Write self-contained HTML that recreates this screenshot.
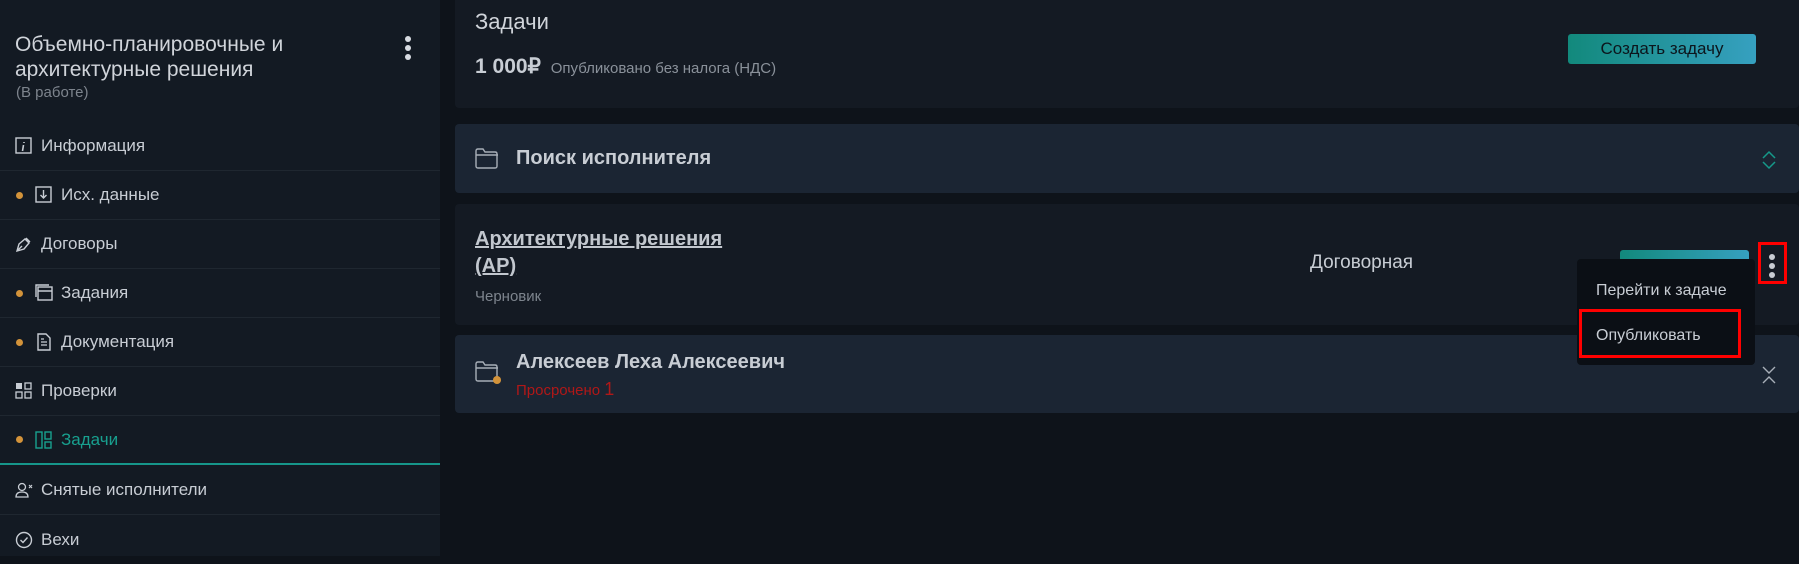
<!DOCTYPE html>
<html><head><meta charset="utf-8"><style>
*{margin:0;padding:0;box-sizing:border-box}
body{width:1799px;height:556px;overflow:hidden;background:#0e131a;font-family:"Liberation Sans",sans-serif;color:#c8cdd4;position:relative}
.abs{position:absolute}
#sb{left:0;top:0;width:440px;height:556px;background:#131a23}
.t{font-size:21px;color:#d0d4da;line-height:25px}
.item{position:absolute;left:0;width:440px;height:49px;border-bottom:1px solid #1f2730;font-size:17px;display:flex;align-items:center}
.dot{position:absolute;left:16px;width:7px;height:7px;border-radius:50%;background:#d3933a}
.ic{position:absolute;width:18px;height:18px}
.card{position:absolute;left:455px;right:0;background:#141a23;border-radius:4px}
.fold{background:#1b2533}
.b{font-weight:bold}
</style></head><body>
<div id="sb" class="abs">
 <div class="abs t" style="left:15px;top:32px">Объемно-планировочные и<br>архитектурные решения</div>
 <div class="abs" style="left:16px;top:84px;font-size:15px;color:#7d848d">(В работе)</div>
 <div class="abs" style="left:405px;top:36px"><div style="width:6px;height:6px;border-radius:50%;background:#d8dce2;margin-bottom:3px"></div><div style="width:6px;height:6px;border-radius:50%;background:#d8dce2;margin-bottom:3px"></div><div style="width:6px;height:6px;border-radius:50%;background:#d8dce2"></div></div>

 <div class="item" style="top:122px"><svg class="ic" style="left:15px" viewBox="0 0 18 18"><rect x="1" y="1" width="15" height="15" fill="none" stroke="#c8cdd4" stroke-width="1.4"/><path d="M9 5v1M8.5 8l-1 6" stroke="#c8cdd4" stroke-width="1.6"/></svg><span style="margin-left:41px">Информация</span></div>
 <div class="item" style="top:171px"><div class="dot"></div><svg class="ic" style="left:35px" viewBox="0 0 18 18"><rect x="1" y="1" width="15" height="15" fill="none" stroke="#c8cdd4" stroke-width="1.4"/><path d="M8.5 4v8M5.5 9l3 3 3-3" fill="none" stroke="#c8cdd4" stroke-width="1.4"/></svg><span style="margin-left:61px">Исх. данные</span></div>
 <div class="item" style="top:220px"><svg class="ic" style="left:15px" viewBox="0 0 18 18"><path d="M2 16l2-7 6-5 4 4-5 6zM2 16l5-5M11 3l4 4" fill="none" stroke="#c8cdd4" stroke-width="1.4"/></svg><span style="margin-left:41px">Договоры</span></div>
 <div class="item" style="top:269px"><div class="dot"></div><svg class="ic" style="left:35px" viewBox="0 0 18 18"><rect x="3" y="3" width="14" height="13" fill="none" stroke="#c8cdd4" stroke-width="1.4"/><path d="M1 13V1h13M3 7h14" fill="none" stroke="#c8cdd4" stroke-width="1.4"/></svg><span style="margin-left:61px">Задания</span></div>
 <div class="item" style="top:318px"><div class="dot"></div><svg class="ic" style="left:35px" viewBox="0 0 18 18"><path d="M3 1h8l4 4v12H3z" fill="none" stroke="#c8cdd4" stroke-width="1.4"/><path d="M6 9h6M6 12h6M6 6h3" stroke="#c8cdd4" stroke-width="1.2"/></svg><span style="margin-left:61px">Документация</span></div>
 <div class="item" style="top:367px"><svg class="ic" style="left:15px" viewBox="0 0 18 18"><rect x="1" y="1" width="6" height="6" fill="#c8cdd4"/><rect x="10" y="1" width="6" height="6" fill="none" stroke="#c8cdd4" stroke-width="1.3"/><rect x="1" y="10" width="6" height="6" fill="none" stroke="#c8cdd4" stroke-width="1.3"/><rect x="10" y="10" width="6" height="6" fill="none" stroke="#c8cdd4" stroke-width="1.3"/></svg><span style="margin-left:41px">Проверки</span></div>
 <div class="item" style="top:416px;border-bottom:2px solid #16968a"><div class="dot"></div><svg class="ic" style="left:35px" viewBox="0 0 18 18"><rect x="1" y="1" width="6" height="16" fill="none" stroke="#18a08f" stroke-width="1.4"/><rect x="10" y="1" width="6" height="7" fill="none" stroke="#18a08f" stroke-width="1.4"/><rect x="10" y="11" width="6" height="6" fill="none" stroke="#18a08f" stroke-width="1.4"/></svg><span style="margin-left:61px;color:#18a08f">Задачи</span></div>
 <div class="item" style="top:466px"><svg class="ic" style="left:15px" viewBox="0 0 18 18"><circle cx="7" cy="6" r="3.5" fill="none" stroke="#c8cdd4" stroke-width="1.3"/><path d="M1 16c0-4 3-5 6-5s6 1 6 5z" fill="none" stroke="#c8cdd4" stroke-width="1.3"/><path d="M14 4l3 3M17 4l-3 3" stroke="#c8cdd4" stroke-width="1.2"/></svg><span style="margin-left:41px">Снятые исполнители</span></div>
 <div class="item" style="top:515px;border:none"><svg class="ic" style="left:15px" viewBox="0 0 18 18"><circle cx="9" cy="9" r="7.5" fill="none" stroke="#c8cdd4" stroke-width="1.4"/><path d="M5.5 9l2.5 2.5 4.5-5" fill="none" stroke="#c8cdd4" stroke-width="1.4"/></svg><span style="margin-left:41px">Вехи</span></div>
</div>

<div class="card" style="top:0;height:108px;border-radius:0 0 4px 4px">
 <div class="abs" style="left:20px;top:9px;font-size:22px;color:#d0d4da">Задачи</div>
 <div class="abs" style="left:20px;top:54px;font-size:21px" ><span class="b" style="color:#c8cdd4">1 000₽</span> <span style="font-size:15px;color:#8a919a;margin-left:4px">Опубликовано без налога (НДС)</span></div>
 <div class="abs" style="left:1113px;top:34px;width:188px;height:30px;border-radius:3px;background:linear-gradient(90deg,#12897c,#36a0c0);color:#0c151c;font-size:17px;text-align:center;line-height:30px">Создать задачу</div>
</div>

<div class="card fold" style="top:124px;height:69px">
 <svg class="abs" style="left:20px;top:24px" width="24" height="21" viewBox="0 0 24 21"><path d="M1 3q0-2 2-2h5l2 3h10q2 0 2 2v12q0 2-2 2H3q-2 0-2-2z M1 7h22" fill="none" stroke="#a8afb8" stroke-width="1.4"/></svg>
 <div class="abs b" style="left:61px;top:23px;font-size:20px;color:#c8cdd4">Поиск исполнителя</div>
 <svg class="abs" style="left:1306px;top:26px" width="16" height="20" viewBox="0 0 16 20"><path d="M2 8l6-6 6 6M2 12l6 6 6-6" fill="none" stroke="#15998a" stroke-width="1.5"/></svg>
</div>

<div class="card" style="top:204px;height:121px">
 <div class="abs b" style="left:20px;top:22px;font-size:20px;line-height:27px;color:#c2c7ce;text-decoration:underline">Архитектурные решения<br>(АР)</div>
 <div class="abs" style="left:20px;top:84px;font-size:15px;color:#7d848d">Черновик</div>
 <div class="abs" style="left:855px;top:48px;font-size:19px;color:#c8cdd4">Договорная</div>
 <div class="abs" style="left:1165px;top:46px;width:129px;height:20px;border-radius:3px;background:linear-gradient(90deg,#12897c,#36a0c0)"></div>
 <div class="abs" style="left:1303px;top:38px;width:29px;height:42px;border:3px solid #f00"></div>
 <div class="abs" style="left:1314px;top:50px"><div style="width:6px;height:6px;border-radius:50%;background:#c8cdd4;margin-bottom:3px"></div><div style="width:6px;height:6px;border-radius:50%;background:#c8cdd4;margin-bottom:3px"></div><div style="width:6px;height:6px;border-radius:50%;background:#c8cdd4"></div></div>
</div>

<div class="card fold" style="top:335px;height:78px">
 <svg class="abs" style="left:20px;top:26px" width="26" height="24" viewBox="0 0 26 24"><path d="M1 3q0-2 2-2h5l2 3h10q2 0 2 2v12q0 2-2 2H3q-2 0-2-2z M1 7h22" fill="none" stroke="#a8afb8" stroke-width="1.4"/><circle cx="22" cy="19" r="4" fill="#d3933a"/></svg>
 <div class="abs b" style="left:61px;top:16px;font-size:20px;color:#c8cdd4">Алексеев Леха Алексеевич</div>
 <div class="abs" style="left:61px;top:44px;font-size:15px;color:#b01818">Просрочено <span style="font-size:18px">1</span></div>
 <svg class="abs" style="left:1306px;top:30px" width="16" height="20" viewBox="0 0 16 20"><path d="M2 2l6 6 6-6M2 18l6-6 6 6" fill="none" stroke="#a8afb8" stroke-width="1.4"/></svg>
</div>

<div class="abs" style="left:1577px;top:259px;width:178px;height:106px;background:#0b0f15;border-radius:4px">
 <div class="abs" style="left:19px;top:23px;font-size:16px;color:#c8cdd4">Перейти к задаче</div>
 <div class="abs" style="left:2px;top:50px;width:162px;height:49px;border:3px solid #f00"></div>
 <div class="abs" style="left:19px;top:68px;font-size:16px;color:#c8cdd4">Опубликовать</div>
</div>
</body></html>
